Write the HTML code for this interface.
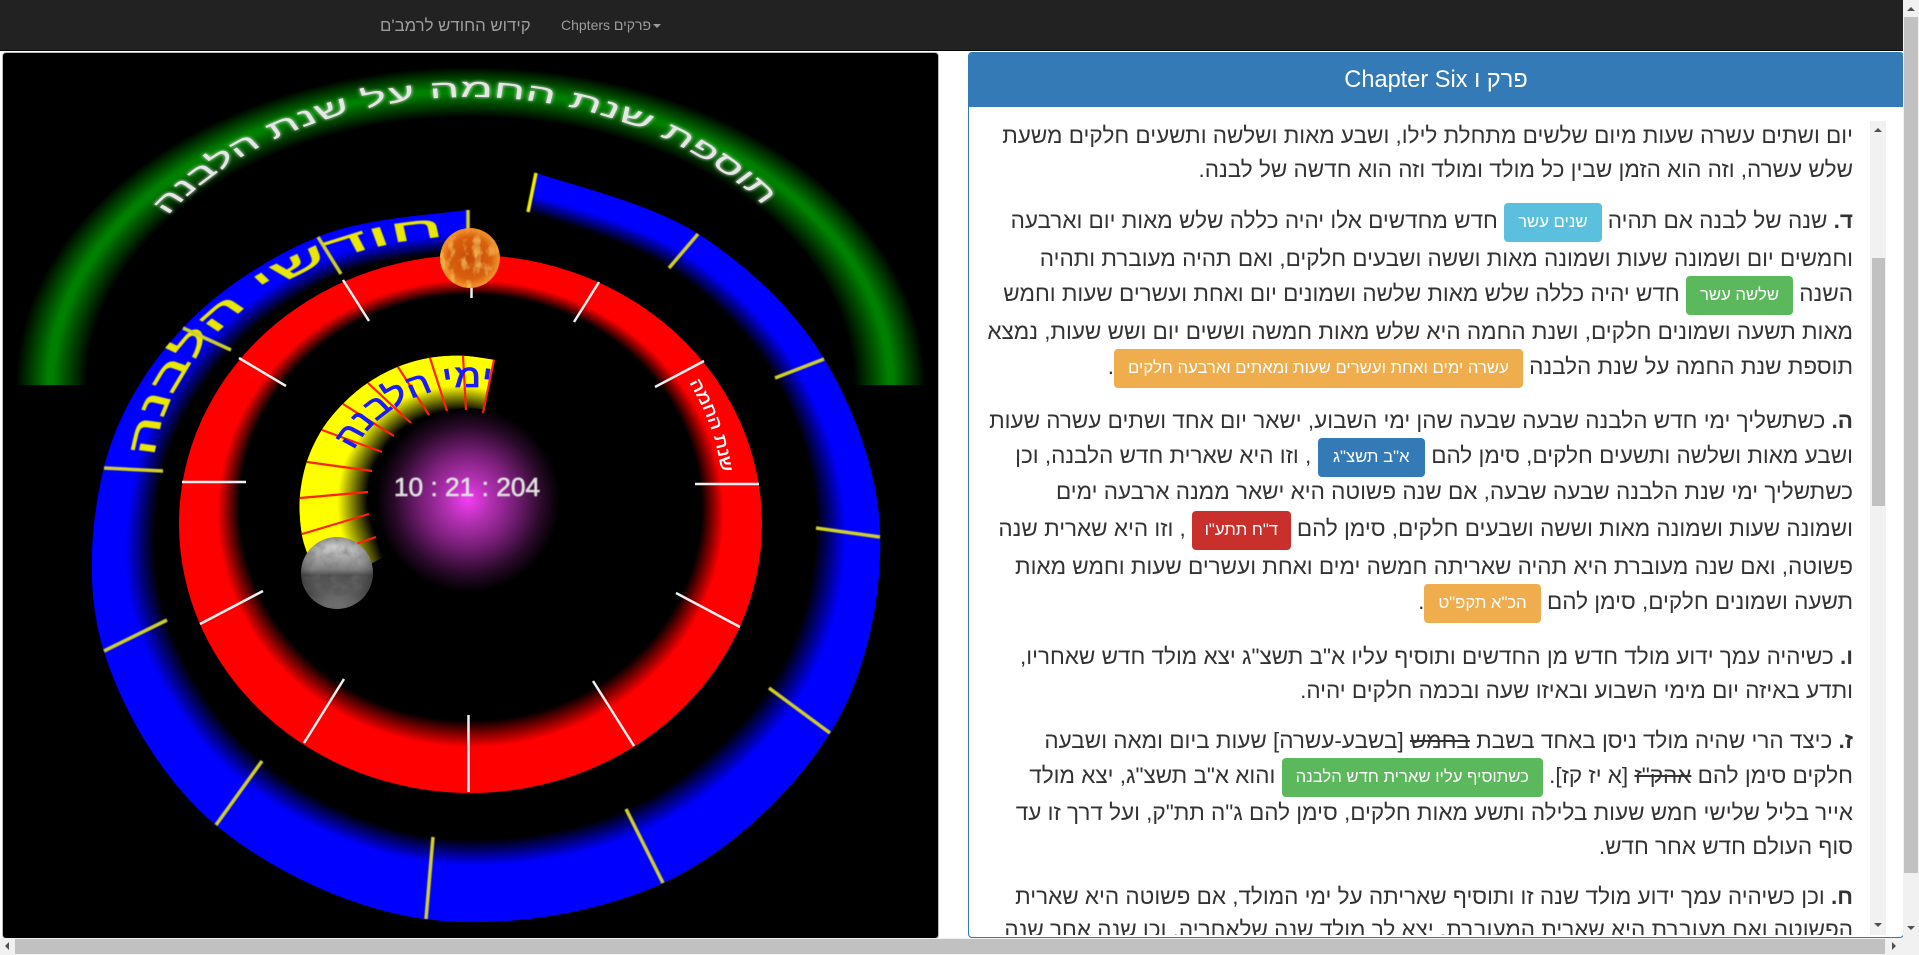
<!DOCTYPE html>
<html lang="he">
<head>
<meta charset="utf-8">
<title>קידוש החודש לרמב'ם</title>
<style>
html,body{margin:0;padding:0;width:1919px;height:955px;overflow:hidden;background:#fff;font-family:"Liberation Sans","Noto Sans CJK JP",sans-serif}
#root{position:relative;width:1919px;height:955px;overflow:hidden}
.abs{position:absolute}
#nav{left:0;top:0;width:1903px;height:50px;background:#222;border-bottom:1px solid #080808}
.nt{position:absolute;white-space:nowrap;color:#9d9d9d}
#cv{left:2px;top:52px;width:935px;height:885px;background:#000;border:1px solid #bbb;border-radius:4px;box-sizing:content-box}
#svg{position:absolute;left:0;top:0}
#panel{left:968px;top:52px;width:934px;height:884px;border:1px solid #337ab7;border-radius:4px;background:#fff;overflow:hidden}
#head{position:absolute;left:0;top:0;width:100%;height:54px;background:#337ab7;color:#fff;font-size:23.6px;line-height:54px;text-align:center;white-space:nowrap}
#scr{left:969px;top:107px;width:917px;height:828px;overflow:hidden}
.l{position:absolute;right:33px;height:34px;line-height:34px;font-size:22.5px;color:#333;white-space:nowrap;direction:rtl}
.b{display:inline-block;height:39px;line-height:37px;margin:-3px 0;padding:0 14px;font-size:16.7px;color:#fff;border-radius:4px;vertical-align:middle;box-sizing:border-box}
.info{background:#5bc0de}.succ{background:#5cb85c}.warn{background:#f0ad4e}.prim{background:#337ab7}.dang{background:#c9302c}
.tr{position:absolute;width:16px;background:#f1f1f1}
.th{position:absolute;background:#c1c1c1}
.up,.dn,.lf,.rt{position:absolute;width:0;height:0}
.up{border-left:4px solid transparent;border-right:4px solid transparent;border-bottom:4px solid #505050}
.dn{border-left:4px solid transparent;border-right:4px solid transparent;border-top:4px solid #505050}
.lf{border-top:4px solid transparent;border-bottom:4px solid transparent;border-right:4px solid #505050}
.rt{border-top:4px solid transparent;border-bottom:4px solid transparent;border-left:4px solid #505050}
</style>
</head>
<body>
<div id="root">
  <div id="nav" class="abs">
    <div class="nt" style="left:380px;top:14px;font-size:16.8px;line-height:24px;direction:rtl">קידוש החודש לרמב'ם</div>
    <div class="nt" style="left:561px;top:15px;font-size:14px;line-height:20px">Chpters פרקים<span style="display:inline-block;width:0;height:0;margin-left:2px;vertical-align:middle;border-top:4px solid #9d9d9d;border-left:4px solid transparent;border-right:4px solid transparent"></span></div>
  </div>

  <div id="cv" class="abs"></div>
  <svg id="svg" width="1919" height="955" viewBox="0 0 1919 955" xmlns="http://www.w3.org/2000/svg" style="position:absolute;left:0;top:0">
    <defs>
      <clipPath id="cvclip"><rect x="3" y="53" width="935" height="885" rx="3"/></clipPath>
      <clipPath id="greenclip"><rect x="0" y="53" width="940" height="332"/></clipPath>
      <radialGradient id="gGreen" gradientUnits="userSpaceOnUse" cx="0" cy="0" r="318" fx="0" fy="0" fr="268" gradientTransform="translate(470.5 385) scale(1.43 1)">
        <stop offset="0" stop-color="#000"/><stop offset=".48" stop-color="#008000"/><stop offset=".55" stop-color="#008000"/><stop offset="1" stop-color="#000"/>
      </radialGradient>
      <radialGradient id="gRed" gradientUnits="userSpaceOnUse" cx="470.5" cy="524" r="269" fx="470.5" fy="506" fr="208" gradientTransform="translate(470.5 0) scale(1.0836 1) translate(-470.5 0)">
        <stop offset="0" stop-color="#000"/><stop offset=".08" stop-color="#000"/><stop offset=".42" stop-color="#f00"/><stop offset="1" stop-color="#f00"/>
      </radialGradient>
      <radialGradient id="gMag" gradientUnits="userSpaceOnUse" cx="468" cy="500" r="92">
        <stop offset="0" stop-color="#f53cf5"/><stop offset=".25" stop-color="#b030b0"/><stop offset=".5" stop-color="#7a1f7a"/><stop offset=".8" stop-color="#2a0a2a"/><stop offset="1" stop-color="#000"/>
      </radialGradient>
      <radialGradient id="gSun" cx=".5" cy=".5" r=".5">
        <stop offset="0" stop-color="#c84e08"/><stop offset=".7" stop-color="#d85f10"/><stop offset=".95" stop-color="#f09028"/><stop offset="1" stop-color="#e07a18"/>
      </radialGradient>
      <linearGradient id="gMoon" x1="0" y1="0" x2="0" y2="1">
        <stop offset="0" stop-color="#bdbdbd"/><stop offset=".12" stop-color="#d2d2d2"/><stop offset=".45" stop-color="#808080"/><stop offset=".53" stop-color="#505050"/><stop offset=".8" stop-color="#5c5c5c"/><stop offset="1" stop-color="#929292"/>
      </linearGradient>
      <radialGradient id="gMoonEdge" cx=".5" cy=".5" r=".5">
        <stop offset=".7" stop-color="#000" stop-opacity="0"/><stop offset="1" stop-color="#000" stop-opacity=".25"/>
      </radialGradient>
      <filter id="sunTex" x="0" y="0" width="100%" height="100%">
        <feTurbulence type="fractalNoise" baseFrequency=".11 .07" numOctaves="3" seed="7" result="n"/>
        <feColorMatrix in="n" type="matrix" values="0 0 0 0 1  0 0 0 0 .55  0 0 0 0 .1  0 0 0 1.9 -.9" result="c"/>
        <feComposite in="c" in2="SourceGraphic" operator="in" result="o"/>
        <feMerge><feMergeNode in="SourceGraphic"/><feMergeNode in="o"/></feMerge>
      </filter>
      <filter id="moonTex" x="0" y="0" width="100%" height="100%">
        <feTurbulence type="fractalNoise" baseFrequency=".1" numOctaves="3" seed="3" result="n"/>
        <feColorMatrix in="n" type="matrix" values="0 0 0 0 .15  0 0 0 0 .15  0 0 0 0 .15  0 0 0 1.2 -.5" result="c"/>
        <feComposite in="c" in2="SourceGraphic" operator="in" result="o"/>
        <feMerge><feMergeNode in="SourceGraphic"/><feMergeNode in="o"/></feMerge>
      </filter>
      <filter id="glow" x="-10%" y="-10%" width="120%" height="120%">
        <feGaussianBlur stdDeviation="1.6" result="b"/>
        <feMerge><feMergeNode in="b"/><feMergeNode in="SourceGraphic"/></feMerge>
      </filter>
      <filter id="soft"><feGaussianBlur stdDeviation=".5"/></filter>
      <path id="pGreen" d="M-252.6 -138.4A288 288 0 0 1 246.1 -149.6"/>
      <path id="pBlue" d="M-242.8 23.8A244 244 0 0 1 27.2 -242.5"/>
      <path id="pRed" d="M155 -175.3A234 234 0 0 1 229.3 46.7"/>
      <path id="pYel" d="M-112.8 -6.9A113 113 0 0 1 60.7 -95.3"/>
    </defs>
    <g clip-path="url(#cvclip)">
      <g clip-path="url(#greenclip)">
        <ellipse cx="470.5" cy="385" rx="454.7" ry="318" fill="url(#gGreen)"/>
      </g>
      <g transform="translate(470.5 385) scale(1.3 1)">
        <text font-size="25" fill="#e6e6e6" filter="url(#glow)" text-anchor="middle" direction="rtl" textLength="530" lengthAdjust="spacingAndGlyphs"><textPath href="#pGreen" startOffset="50%">תוספת שנת החמה על שנת הלבנה</textPath></text>
      </g>
      <g id="spiralB"></g>
      <g transform="translate(470 480) scale(1.3 1)">
        <text font-size="30" fill="#e8e800" stroke="#e8e800" stroke-width=".6" filter="url(#soft)" text-anchor="middle" direction="rtl" textLength="340" lengthAdjust="spacingAndGlyphs"><textPath href="#pBlue" startOffset="50%">חודשי הלבנה</textPath></text>
      </g>
      <g id="ticksB" stroke="#d0d028" stroke-width="3.5" fill="none" filter="url(#soft)">
        <path d="M468 210L468 250M318 237L341 274M183 328L231 350M104 468L163 471M104 651L167 620M216 825L262 761M426 919L433 837M663 883L626 809M830 733L769 688M880 537L816 528M824 359L775 378M698 234L669 268"/>
        <path d="M536 173L528 212" stroke="#f0f000"/>
      </g>
      <ellipse cx="470.5" cy="524" rx="291.5" ry="269" fill="url(#gRed)"/>
      <g stroke="#f0f0f0" stroke-width="2.5" fill="none">
        <path d="M471.5 285L471.5 298M343 280L369 321M599 282L574 322M239 358L286 386M704 361L655 387M182 482L246 482M759 484L695 484M200 624L263 591M740 627L676 593M304 743L344 679M634 746L593 681M468.5 792L468.5 715"/>
      </g>
      <g transform="translate(470.5 500) scale(1.08 1)">
        <text font-size="16" fill="#fff" stroke="#fff" stroke-width=".3" text-anchor="middle" direction="rtl" textLength="95" lengthAdjust="spacingAndGlyphs"><textPath href="#pRed" startOffset="50%">שנת החמה</textPath></text>
      </g>
      <g id="spiralY"></g>
      <circle cx="468" cy="500" r="92" fill="url(#gMag)"/>
      <g stroke="#ff2200" stroke-width="2.2" fill="none">
        <path d="M494 360L483 413M463 356L466 410M430 358L447 411M398 367L429 415M368 383L411 423M343 404L394 436M322 430L382 452M307 462L372 471M300 498L368 492M302 534L369 514M310 560L376 537"/>
      </g>
      <g transform="translate(468 500) scale(1.125 1)">
        <text font-size="32" fill="#1a1aff" stroke="#1a1aff" stroke-width=".8" text-anchor="middle" direction="rtl" textLength="146" lengthAdjust="spacingAndGlyphs"><textPath href="#pYel" startOffset="50%">ימי הלבנה</textPath></text>
      </g>
      <text x="467" y="496" font-size="26.3" fill="#e0e0e0" stroke="#e0e0e0" stroke-width=".6" text-anchor="middle" filter="url(#soft)" direction="ltr">10 : 21 : 204</text>
      <circle cx="337" cy="573" r="36" fill="url(#gMoon)" filter="url(#moonTex)"/>
      <circle cx="337" cy="573" r="36" fill="url(#gMoonEdge)"/>
      <circle cx="470" cy="258" r="30" fill="url(#gSun)" filter="url(#sunTex)"/>
    </g>
  </svg>

  <div id="panel" class="abs">
    <div id="head">Chapter Six פרק ו</div>
  </div>

  <div id="scr" class="abs">
    <div class="l" style="top:12px">יום ושתים עשרה שעות מיום שלשים מתחלת לילו, ושבע מאות ושלשה ותשעים חלקים משעת</div>
    <div class="l" style="top:46px">שלש עשרה, וזה הוא הזמן שבין כל מולד ומולד וזה הוא חדשה של לבנה.</div>

    <div class="l" style="top:97px"><b>ד.</b> שנה של לבנה אם תהיה <span class="b info">שנים עשר</span> חדש מחדשים אלו יהיה כללה שלש מאות יום וארבעה</div>
    <div class="l" style="top:135px">וחמשים יום ושמונה שעות ושמונה מאות וששה ושבעים חלקים, ואם תהיה מעוברת ותהיה</div>
    <div class="l" style="top:170px">השנה <span class="b succ">שלשה עשר</span> חדש יהיה כללה שלש מאות שלשה ושמונים יום ואחת ועשרים שעות וחמש</div>
    <div class="l" style="top:208px">מאות תשעה ושמונים חלקים, ושנת החמה היא שלש מאות חמשה וששים יום ושש שעות, נמצא</div>
    <div class="l" style="top:243px">תוספת שנת החמה על שנת הלבנה <span class="b warn">עשרה ימים ואחת ועשרים שעות ומאתים וארבעה חלקים</span>.</div>

    <div class="l" style="top:297px"><b>ה.</b> כשתשליך ימי חדש הלבנה שבעה שבעה שהן ימי השבוע, ישאר יום אחד ושתים עשרה שעות</div>
    <div class="l" style="top:332px">ושבע מאות ושלשה ותשעים חלקים, סימן להם <span class="b prim" style="padding:0 15.5px">א"ב תשצ"ג</span> , וזו היא שארית חדש הלבנה, וכן</div>
    <div class="l" style="top:368px">כשתשליך ימי שנת הלבנה שבעה שבעה, אם שנה פשוטה היא ישאר ממנה ארבעה ימים</div>
    <div class="l" style="top:405px">ושמונה שעות ושמונה מאות וששה ושבעים חלקים, סימן להם <span class="b dang" style="padding:0 12.5px">ד"ח תתע"ו</span> , וזו היא שארית שנה</div>
    <div class="l" style="top:443px">פשוטה, ואם שנה מעוברת היא תהיה שאריתה חמשה ימים ואחת ועשרים שעות וחמש מאות</div>
    <div class="l" style="top:478px">תשעה ושמונים חלקים, סימן להם <span class="b warn">הכ"א תקפ"ט</span>.</div>

    <div class="l" style="top:533px"><b>ו.</b> כשיהיה עמך ידוע מולד חדש מן החדשים ותוסיף עליו א"ב תשצ"ג יצא מולד חדש שאחריו,</div>
    <div class="l" style="top:567px">ותדע באיזה יום מימי השבוע ובאיזו שעה ובכמה חלקים יהיה.</div>

    <div class="l" style="top:617px"><b>ז.</b> כיצד הרי שהיה מולד ניסן באחד בשבת <s>בחמש</s> [בשבע-עשרה] שעות ביום ומאה ושבעה</div>
    <div class="l" style="top:652px">חלקים סימן להם <s>אהק"ז</s> [א יז קז]. <span class="b succ">כשתוסיף עליו שארית חדש הלבנה</span> והוא א"ב תשצ"ג, יצא מולד</div>
    <div class="l" style="top:689px">אייר בליל שלישי חמש שעות בלילה ותשע מאות חלקים, סימן להם ג"ה תת"ק, ועל דרך זו עד</div>
    <div class="l" style="top:723px">סוף העולם חדש אחר חדש.</div>

    <div class="l" style="top:773px"><b>ח.</b> וכן כשיהיה עמך ידוע מולד שנה זו ותוסיף שאריתה על ימי המולד, אם פשוטה היא שארית</div>
    <div class="l" style="top:806px">הפשוטה ואם מעוברת היא שארית המעוברת, יצא לך מולד שנה שלאחריה, וכן שנה אחר שנה</div>
  </div>

  <!-- inner scrollbar -->
  <div class="tr" style="left:1870px;top:121px;height:814px"></div>
  <div class="th" style="left:1872px;top:258px;width:13px;height:248px"></div>
  <div class="up" style="left:1874px;top:128px"></div>
  <div class="dn" style="left:1874px;top:923px"></div>

  <!-- page vertical scrollbar -->
  <div class="tr" style="left:1903px;top:0;height:955px"></div>
  <div class="th" style="left:1904px;top:17px;width:14px;height:856px"></div>
  <div class="up" style="left:1907px;top:7px"></div>
  <div class="dn" style="left:1907px;top:926px"></div>

  <!-- page horizontal scrollbar -->
  <div class="abs" style="left:0;top:938px;width:1903px;height:17px;background:#f1f1f1"></div>
  <div class="th" style="left:15px;top:939px;width:1870px;height:15px"></div>
  <div class="lf" style="left:5px;top:942px"></div>
  <div class="rt" style="left:1892px;top:942px"></div>
</div>

<script>
(function(){
  var NS='http://www.w3.org/2000/svg';
  function cr(P,n){
    var o=[],N=P.length;
    for(var i=0;i<N-1;i++){
      var p0=P[Math.max(0,i-1)],p1=P[i],p2=P[i+1],p3=P[Math.min(N-1,i+2)];
      for(var j=0;j<n;j++){
        var t=j/n,t2=t*t,t3=t2*t,a=[];
        for(var c=0;c<2;c++){
          a[c]=.5*(2*p1[c]+(p2[c]-p0[c])*t+(2*p0[c]-5*p1[c]+4*p2[c]-p3[c])*t2+(3*p1[c]-p0[c]-3*p2[c]+p3[c])*t3);
        }
        o.push(a);
      }
    }
    o.push(P[N-1].slice());
    return o;
  }
  function band(g,A,B,rgb,solidAt){
    var host=document.getElementById(g),K=26;
    function curve(u,isFade){
      return A.map(function(p,i){
        var s=solidAt(p),t=isFade?s+(1-s)*u:s*u;
        return [p[0]+(B[i][0]-p[0])*t,p[1]+(B[i][1]-p[1])*t];
      });
    }
    function add(a,b,col){
      var pts=a.concat(b.slice().reverse());
      var d='M'+pts.map(function(p){return p[0].toFixed(1)+' '+p[1].toFixed(1);}).join('L')+'Z';
      var el=document.createElementNS(NS,'path');
      el.setAttribute('d',d);el.setAttribute('fill',col);el.setAttribute('stroke',col);el.setAttribute('stroke-width','.5');
      host.appendChild(el);
    }
    for(var k=K-1;k>=0;k--){
      var f=1-(k+.5)/K;
      add(curve(k/K,true),curve((k+1)/K,true),'rgb('+Math.round(rgb[0]*f)+','+Math.round(rgb[1]*f)+','+Math.round(rgb[2]*f)+')');
    }
    add(curve(0,false),curve(1,false),'rgb('+rgb.join(',')+')');
  }
  var bo=cr([[468,210],[318,237],[183,328],[104,468],[104,651],[216,825],[426,919],[663,883],[830,733],[880,537],[824,359],[698,234],[536,173]],14);
  var bi=cr([[468,250],[341,274],[231,350],[163,471],[167,620],[262,761],[433,837],[626,809],[769,688],[816,528],[775,378],[669,268],[528,212]],14);
  band('spiralB',bo,bi,[0,0,255],function(p){return .53+.15*Math.max(0,(p[1]-600)/320);});
  var yo=cr([[494,360],[463,356],[430,358],[398,367],[368,383],[343,404],[322,430],[307,462],[300,498],[302,534],[310,560],[322,590]],10);
  var yi=cr([[483,413],[466,410],[447,411],[429,415],[411,423],[394,436],[382,452],[372,471],[368,492],[369,514],[376,537],[383,557]],10);
  band('spiralY',yo,yi,[255,255,0],function(){return .55;});
})();
</script>
</body>
</html>
